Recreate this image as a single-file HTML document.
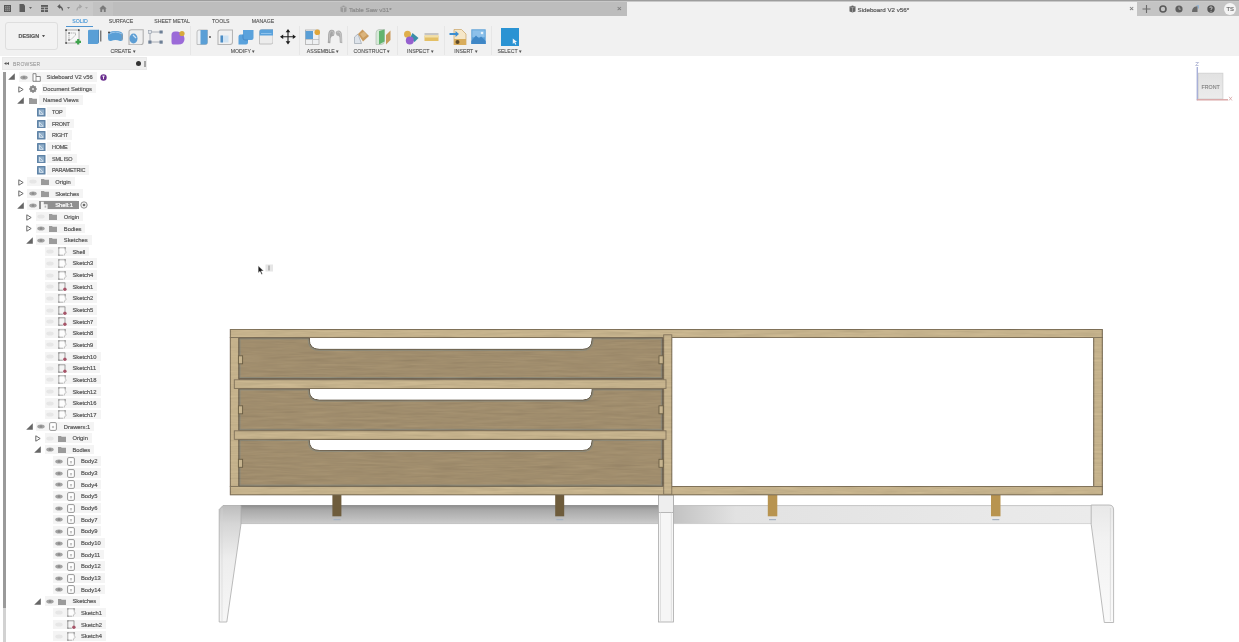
<!DOCTYPE html>
<html><head><meta charset="utf-8">
<style>
*{box-sizing:border-box;margin:0;padding:0}
html,body{width:1239px;height:642px;overflow:hidden;background:#fff}
body{position:relative;font-family:"Liberation Sans",sans-serif;color:#555}
.a{position:absolute}
.ic{position:absolute;display:block}
.lb{position:absolute;height:9.5px;background:#f4f4f4}
.act{position:absolute;height:10px;background:#8f8f8f}
.tx{position:absolute;font-size:5.8px;line-height:8px;white-space:nowrap;-webkit-text-stroke:0.18px currentColor}
.tb{position:absolute;font-size:5.2px;line-height:7px;white-space:nowrap;color:#505050;transform:translateX(-50%);-webkit-text-stroke:0.1px currentColor}
.sep{position:absolute;top:26px;width:1px;height:29px;background:#e6e6e6}
#w{position:absolute;left:0;top:0;width:1239px;height:642px;overflow:hidden;background:#fff;filter:blur(0.5px)}
</style></head><body><div id="w">
<!-- tab bar -->
<div class="a" style="left:0;top:0;width:1239px;height:16px;background:#c9c9c9"></div>
<div class="a" style="left:0;top:0;width:1239px;height:1.2px;background:#9d9d9d"></div>
<div class="a" style="left:93px;top:1.5px;width:20px;height:14.5px;background:#c2c2c2"></div>
<div class="a" style="left:113px;top:1.5px;width:514px;height:14.5px;background:#bdbdbd"></div>
<div class="a" style="left:627px;top:1.5px;width:510px;height:14.5px;background:#f1f1f1"></div>
<div class="a" style="left:1137px;top:1.5px;width:102px;height:14.5px;background:#c4c4c4"></div>
<!-- left app icons -->
<svg class="ic" style="left:3.5px;top:4.5px" width="7" height="7" viewBox="0 0 7 7"><rect x="0.5" y="0.5" width="6" height="6" fill="#8c8c8c" stroke="#555" stroke-width="1"/><path d="M0.5 2.5 H6.5 M0.5 4.5 H6.5 M2.5 0.5 V6.5 M4.5 0.5 V6.5" stroke="#666" stroke-width="0.6"/></svg>
<svg class="ic" style="left:19px;top:4px" width="14" height="8" viewBox="0 0 14 8"><path d="M0.5 0 H4.5 L6 1.5 V8 H0.5 Z" fill="#5c5c5c"/><path d="M10 3 H13 L11.5 5 Z" fill="#666"/></svg>
<svg class="ic" style="left:41px;top:4.5px" width="7" height="7" viewBox="0 0 7 7"><rect x="0" y="0" width="7" height="7" fill="#5c5c5c"/><path d="M0 2.3 H7 M0 4.6 H7 M3.5 2.3 V7" stroke="#c9c9c9" stroke-width="0.7"/></svg>
<svg class="ic" style="left:57px;top:4px" width="14" height="8" viewBox="0 0 14 8"><path d="M5.5 6.5 Q5.5 2.5 1.5 2.5 M3.2 0.8 L1.2 2.5 L3.2 4.2" fill="none" stroke="#5c5c5c" stroke-width="1.3"/><path d="M10 3 H13 L11.5 5 Z" fill="#777"/></svg>
<svg class="ic" style="left:76px;top:4px" width="14" height="8" viewBox="0 0 14 8"><path d="M1 6.5 Q1 2.5 5 2.5 M3.3 0.8 L5.3 2.5 L3.3 4.2" fill="none" stroke="#a6a6a6" stroke-width="1.2"/><path d="M9 3 H12 L10.5 5 Z" fill="#aaa"/></svg>
<svg class="ic" style="left:99px;top:5px" width="8" height="7" viewBox="0 0 8 7"><path d="M4 0.3 L7.7 3.5 H6.7 V7 H1.3 V3.5 H0.3 Z" fill="#7a7a7a"/><rect x="3.2" y="4.4" width="1.6" height="2.6" fill="#c2c2c2"/></svg>
<!-- inactive tab -->
<svg class="ic" style="left:340px;top:5px" width="7" height="8" viewBox="0 0 7 8"><path d="M0.5 1.5 L3.5 0.5 L6.5 1.5 V6.5 L3.5 7.5 L0.5 6.5 Z" fill="#9a9a9a"/><path d="M0.5 1.5 L3.5 2.5 L6.5 1.5 M3.5 2.5 V7.5" stroke="#cfcfcf" stroke-width="0.6" fill="none"/></svg>
<div class="tx" style="left:349px;top:5.5px;font-size:6.2px;color:#8a8a8a">Table Saw v31*</div>
<div class="tx" style="left:617px;top:5.2px;font-size:8px;color:#7a7a7a">&#215;</div>
<!-- active tab -->
<svg class="ic" style="left:848.5px;top:5px" width="7" height="8" viewBox="0 0 7 8"><path d="M0.5 1.5 L3.5 0.5 L6.5 1.5 V6.5 L3.5 7.5 L0.5 6.5 Z" fill="#666"/><path d="M0.5 1.5 L3.5 2.5 L6.5 1.5 M3.5 2.5 V7.5" stroke="#bbb" stroke-width="0.6" fill="none"/></svg>
<div class="tx" style="left:857.5px;top:5.5px;font-size:6.2px;color:#555">Sideboard V2 v56*</div>
<div class="tx" style="left:1129.3px;top:5.2px;font-size:8px;color:#777">&#215;</div>
<!-- right icons -->
<svg class="ic" style="left:1142px;top:5px" width="9" height="8" viewBox="0 0 9 8"><path d="M4.5 0 V8 M0.5 4 H8.5" stroke="#6a6a6a" stroke-width="1.1"/></svg>
<svg class="ic" style="left:1158.5px;top:5px" width="8" height="8" viewBox="0 0 8 8"><circle cx="4" cy="4" r="3" fill="none" stroke="#5a5a5a" stroke-width="1.6"/></svg>
<svg class="ic" style="left:1175px;top:5px" width="8" height="8" viewBox="0 0 8 8"><circle cx="4" cy="4" r="3.6" fill="#5e5e5e"/><path d="M4 1.8 V4.2 H5.8" stroke="#c4c4c4" stroke-width="0.8" fill="none"/></svg>
<svg class="ic" style="left:1191px;top:4.5px" width="8" height="8" viewBox="0 0 8 8"><path d="M1 7 Q1 2 5 1.5 L6.5 1 V7 Z" fill="#6a6a6a"/><path d="M5.5 0.8 L7.5 0.5 V3.5" stroke="#8fb3d6" stroke-width="1" fill="none"/></svg>
<svg class="ic" style="left:1207px;top:5px" width="8" height="8" viewBox="0 0 8 8"><circle cx="4" cy="4" r="3.7" fill="#555"/><path d="M2.8 3 Q2.8 1.8 4 1.8 Q5.2 1.8 5.2 3 Q5.2 3.8 4 4.3 V5" stroke="#d0d0d0" stroke-width="0.9" fill="none"/><circle cx="4" cy="6.2" r="0.5" fill="#d0d0d0"/></svg>
<div class="a" style="left:1224px;top:3px;width:12px;height:12px;border-radius:50%;background:#f4f4f4"></div>
<div class="tx" style="left:1226.5px;top:5px;font-size:5.8px;color:#666">TS</div>

<!-- toolbar -->
<div class="a" style="left:0;top:16px;width:1239px;height:40px;background:#f1f1f1"></div>
<div class="a" style="left:5.3px;top:21.6px;width:52.3px;height:28.4px;border:1px solid #dedede;border-radius:3px;background:#f2f2f2"></div>
<div class="tx" style="left:18.5px;top:31.8px;font-size:5.4px;font-weight:bold;color:#5a5a5a">DESIGN</div>
<svg class="ic" style="left:41.5px;top:34.6px" width="3" height="2.5" viewBox="0 0 3 2.5"><path d="M0 0 H3 L1.5 2.5 Z" fill="#555"/></svg>
<!-- tabs -->
<div class="tb" style="left:80px;top:18.2px;color:#3d92d6">SOLID</div>
<div class="a" style="left:66px;top:26px;width:27px;height:1.2px;background:#4f94cf"></div>
<div class="tb" style="left:121px;top:18.2px">SURFACE</div>
<div class="tb" style="left:172px;top:18.2px">SHEET METAL</div>
<div class="tb" style="left:220.8px;top:18.2px">TOOLS</div>
<div class="tb" style="left:263px;top:18.2px">MANAGE</div>
<!-- group labels -->
<div class="tb" style="left:123px;top:48px">CREATE &#9662;</div>
<div class="tb" style="left:243px;top:48px">MODIFY &#9662;</div>
<div class="tb" style="left:323px;top:48px">ASSEMBLE &#9662;</div>
<div class="tb" style="left:372px;top:48px">CONSTRUCT &#9662;</div>
<div class="tb" style="left:420.4px;top:48px">INSPECT &#9662;</div>
<div class="tb" style="left:466px;top:48px">INSERT &#9662;</div>
<div class="tb" style="left:509.7px;top:48px">SELECT &#9662;</div>
<!-- separators -->
<div class="sep" style="left:190px"></div>
<div class="sep" style="left:299.3px"></div>
<div class="sep" style="left:347px"></div>
<div class="sep" style="left:396.5px"></div>
<div class="sep" style="left:444.3px"></div>
<div class="sep" style="left:491px"></div>
<!-- CREATE icons -->
<svg class="ic" style="left:65px;top:28.5px" width="16" height="16" viewBox="0 0 16 16">
<rect x="1" y="1" width="13" height="13" fill="#f7f7f7" stroke="#6a6a6a" stroke-width="0.5"/>
<rect x="0.3" y="0.3" width="1.6" height="1.6" fill="#444"/><rect x="0.3" y="13.2" width="1.6" height="1.6" fill="#444"/><rect x="13" y="0.3" width="1.6" height="1.6" fill="#444"/>
<path d="M4 4 V11 M4 4 H10.5 V6 Q8 9 5 11" fill="none" stroke="#8a8a8a" stroke-width="0.7" stroke-dasharray="1.2 0.6"/><rect x="3.3" y="3.3" width="1.4" height="1.4" fill="#555"/><rect x="3.3" y="10.3" width="1.4" height="1.4" fill="#555"/>
<path d="M10.5 12.8 H16 M13.2 10 V15.6" stroke="#3fa34d" stroke-width="2.2"/>
</svg>
<svg class="ic" style="left:86.5px;top:29px" width="15" height="16" viewBox="0 0 15 16">
<path d="M1 2 Q1 0.8 2.5 0.8 H11.5 V13.8 Q11.5 15 10 15 H1 Z" fill="#5a9fd6"/>
<path d="M11.5 0.8 V13.8" stroke="#3d7fb8" stroke-width="0.8"/>
<path d="M13.8 1.5 V12.5" stroke="#333" stroke-width="0.9"/>
</svg>
<svg class="ic" style="left:106.5px;top:30px" width="17" height="13" viewBox="0 0 17 13">
<path d="M1 5 Q1 1 8.5 1 Q16 1 16 5 V8.5 Q16 11.5 13 11 Q8.5 9 4 11 Q1 11.5 1 8.5 Z" fill="#5a9fd6"/>
<path d="M2 4 Q8.5 0.2 15 4" fill="none" stroke="#9cc6ea" stroke-width="1"/>
<circle cx="2" cy="2.5" r="1" fill="#444"/>
<path d="M14.5 4 Q16.5 7 14.5 10" fill="none" stroke="#999" stroke-width="0.8"/>
</svg>
<svg class="ic" style="left:128px;top:28.5px" width="16" height="16.5" viewBox="0 0 16 16.5">
<path d="M1 3 Q1 0.8 3.5 0.8 H15.2 V13 Q15.2 15.8 12.5 15.8 H1 Z" fill="#efefef" stroke="#b0b0b0" stroke-width="1.1"/>
<ellipse cx="5.5" cy="9.5" rx="4" ry="5" fill="#5d9ed4"/>
<path d="M5 6 L8 9" stroke="#cfe5f7" stroke-width="1.3"/>
</svg>
<svg class="ic" style="left:148px;top:30px" width="15.5" height="14" viewBox="0 0 15.5 14">
<path d="M2 2 V12 M2 2 H13 M2 12 H13" stroke="#9aa0a8" stroke-width="0.8"/>
<rect x="0.3" y="0.3" width="3" height="3" fill="#dfe4ea" stroke="#8892a0" stroke-width="0.5"/>
<rect x="11.5" y="0.5" width="3.2" height="3" fill="#6d7f96"/>
<rect x="0.3" y="10.5" width="3.2" height="3.2" fill="#6d7f96"/>
<rect x="11.5" y="10.5" width="3.2" height="3.2" fill="#6d7f96"/>
</svg>
<svg class="ic" style="left:169.5px;top:29.5px" width="16" height="15" viewBox="0 0 16 15">
<path d="M1.5 5 Q1.5 1 6 1.5 Q9 1 11 3 Q14.5 5 14.5 9 Q14.5 14.5 8 14.5 H3 Q1.5 14.5 1.5 12 Z" fill="#9b6ad8"/>
<circle cx="12" cy="3.5" r="2.6" fill="#d7a93c"/>
</svg>
<!-- MODIFY icons -->
<svg class="ic" style="left:195.5px;top:28.5px" width="16" height="16" viewBox="0 0 16 16">
<path d="M1 3 Q1 1 3 1 H11.5 V13.5 Q11.5 15.5 9.5 15.5 H1 Z" fill="#eef1f4" stroke="#aaa" stroke-width="0.7"/>
<path d="M4.5 1 H11.5 V13.5 Q11.5 15.5 9.5 15.5 H4.5 Z" fill="#5a9fd6"/>
<circle cx="14" cy="8" r="0.9" fill="#444"/>
</svg>
<svg class="ic" style="left:216.5px;top:28.5px" width="16.5" height="16.5" viewBox="0 0 16.5 16.5">
<path d="M1 3.5 Q1 1 3.5 1 H15.5 V13 Q15.5 15.5 13 15.5 H1 Z" fill="#f1f1f1" stroke="#b5b5b5" stroke-width="1.1"/>
<rect x="3.5" y="6.5" width="8" height="7" fill="#cfe3f3"/>
<path d="M3.5 6.5 H6 V13.5 H3.5 Z" fill="#4d8dc4"/>
</svg>
<svg class="ic" style="left:237.5px;top:29px" width="16" height="15.5" viewBox="0 0 16 15.5">
<path d="M5 1 H15.5 V9 Q15.5 11 13.5 11 H10 V13.5 Q10 15.5 8 15.5 H0.5 V7.5 Q0.5 5.5 2.5 5.5 H5 Z" fill="#5aa2dc"/>
<path d="M5 5.5 V9 Q5 11 7 11 H10" fill="none" stroke="#3d80bd" stroke-width="0.7"/>
</svg>
<svg class="ic" style="left:258.8px;top:29px" width="14.5" height="15.5" viewBox="0 0 14.5 15.5">
<path d="M0.5 2.5 Q0.5 0.5 2.5 0.5 H14 V13 Q14 15 12 15 H0.5 Z" fill="#ececec" stroke="#b5b5b5" stroke-width="0.8"/>
<path d="M0.5 2.5 Q0.5 0.5 2.5 0.5 H14 V6.5 H0.5 Z" fill="#5aa2dc"/>
<path d="M2 4.5 H12.5" stroke="#8ec2ec" stroke-width="1"/>
</svg>
<svg class="ic" style="left:279.5px;top:29px" width="16" height="15.5" viewBox="0 0 16 15.5">
<path d="M8 1.5 V14 M1.5 7.75 H14.5" stroke="#1e1e1e" stroke-width="1.1"/>
<path d="M8 0 L10.3 3.2 H5.7 Z M8 15.5 L10.3 12.3 H5.7 Z M0 7.75 L3.2 5.45 V10.05 Z M16 7.75 L12.8 5.45 V10.05 Z" fill="#1e1e1e"/>
</svg>
<!-- ASSEMBLE icons -->
<svg class="ic" style="left:305px;top:29px" width="15" height="16" viewBox="0 0 15 16">
<rect x="0.5" y="1" width="13.5" height="14.5" fill="#eef0f2" stroke="#9a9a9a" stroke-width="0.6"/>
<rect x="0.5" y="2" width="7.5" height="8" fill="#5a9fd6"/>
<path d="M0.5 10.5 H14 M7.5 10.5 V15.5" stroke="#aaa" stroke-width="0.6"/>
<circle cx="12.3" cy="3.2" r="2.8" fill="#e0a63a"/>
</svg>
<svg class="ic" style="left:326.5px;top:29px" width="16" height="15" viewBox="0 0 16 15">
<path d="M0.8 14 L1.2 5.5 Q1.5 0.8 4.8 0.8 Q7.8 0.8 7.6 3.8 L7 6.8 Q4.2 6.5 3.6 9.5 L3.3 14.2 Z" fill="#a6a6a6"/>
<path d="M2.2 12.5 L2.5 5.5 Q2.8 2 4.8 2 Q6.5 2 6.4 4 L6 5.8" fill="none" stroke="#d4d4d4" stroke-width="0.6"/>
<path d="M8.6 4 Q8.8 1.5 11.3 1.5 Q14.6 1.5 15 6 L15.3 14.2 L12.8 13.8 L12.5 8.5 Q12.2 6.8 9.8 6.6 Z" fill="#b0b0b0"/>
<path d="M10 3.2 Q11.5 2.5 13 3.8 Q14 5 14 8 L14.2 12.8" fill="none" stroke="#dadada" stroke-width="0.6"/>
</svg>
<!-- CONSTRUCT icons -->
<svg class="ic" style="left:353.5px;top:29px" width="15.5" height="15" viewBox="0 0 15.5 15">
<path d="M0.5 14.5 V8 L4 5 L7.5 14.5 Z" fill="#dde3ea" stroke="#8f99a5" stroke-width="0.6"/>
<path d="M4 5 L8.5 0.5 L15 7 L9 12.5 Z" fill="#c99a5c"/>
<path d="M6 5 L10 2.5 L13 6 L9 9 Z" fill="#dbb47c"/>
</svg>
<svg class="ic" style="left:374.5px;top:28.5px" width="16.5" height="16" viewBox="0 0 16.5 16">
<path d="M1 4 Q1 1 4 0.5 L9.5 0.5 V12 Q9.5 15.5 6 15.5 H1 Z" fill="#d5ead7" stroke="#a8b3a9" stroke-width="0.6"/>
<path d="M4 2 L9.5 0.5 V12.5 L4 15.5 Z" fill="#62b36e"/>
<path d="M11 6 L15.5 1.5 V11 L11 15.5 Z" fill="#c99a5c"/>
</svg>
<!-- INSPECT icons -->
<svg class="ic" style="left:402.5px;top:29.5px" width="16" height="15" viewBox="0 0 16 15">
<circle cx="4.5" cy="4.2" r="3.5" fill="#e0b04c"/>
<path d="M9.5 3 L15.5 8 L11.5 12 L7 8 Z" fill="#3a8fa8"/>
<circle cx="6.8" cy="10.5" r="4" fill="#9560cf"/>
</svg>
<svg class="ic" style="left:424px;top:32.5px" width="15" height="8.5" viewBox="0 0 15 8.5">
<rect x="0.5" y="0.5" width="14" height="1" fill="#9a9a9a"/>
<rect x="0.5" y="2.5" width="14" height="5.5" fill="#e4c066"/>
<rect x="0.5" y="2.5" width="14" height="2" fill="#f1e0aa"/>
</svg>
<!-- INSERT icons -->
<svg class="ic" style="left:448.5px;top:28.5px" width="18" height="16.5" viewBox="0 0 18 16.5">
<path d="M5 0.5 H12.5 L17 5 V16 H5 Z" fill="#f6e7c8" stroke="#c9a464" stroke-width="0.7"/>
<path d="M5 10 H17 V16 H5 Z" fill="#d9ad5c"/>
<circle cx="8.5" cy="13" r="2" fill="#5e4a2a"/>
<path d="M0.5 5 H7" stroke="#3d8ed0" stroke-width="2"/>
<path d="M6.5 2 L10 5 L6.5 8 Z" fill="#3d8ed0"/>
</svg>
<svg class="ic" style="left:471px;top:28.5px" width="15" height="15.5" viewBox="0 0 15 15.5">
<rect x="0.3" y="0.3" width="14.4" height="14.8" fill="#5aa0d8"/>
<rect x="1.3" y="1.3" width="12.4" height="7" fill="#8cc0ea"/>
<path d="M0.3 12 L5 6.5 L8 9.5 L10 7.5 L14.7 12 V15.1 H0.3 Z" fill="#3f87c6"/>
<circle cx="11" cy="4" r="1.3" fill="#e6f2fb"/>
</svg>
<!-- SELECT -->
<svg class="ic" style="left:500.8px;top:27.6px" width="18.2" height="18.2" viewBox="0 0 18.2 18.2">
<rect x="0" y="0" width="18.2" height="18.2" fill="#2a93d3"/>
<path d="M11.8 10.5 V16 L13.2 14.6 L14.4 16.8 L15.3 16.3 L14.2 14.1 L16.1 14 Z" fill="#f0f6fb"/>
</svg>

<!-- browser -->
<div class="a" style="left:1.5px;top:57px;width:145.5px;height:12.8px;background:#efefef;border:0.6px solid #e9e9e9"></div>
<svg class="ic" style="left:4px;top:62.2px" width="5" height="3" viewBox="0 0 5 3"><path d="M2.5 0 L0 1.5 L2.5 3 Z M5 0 L2.5 1.5 L5 3 Z" fill="#555"/></svg>
<div class="tx" style="left:13px;top:59.6px;font-size:5.1px;color:#8a8a8a;letter-spacing:0.15px;-webkit-text-stroke:0">BROWSER</div>
<div class="a" style="left:136px;top:61.3px;width:5px;height:5px;border-radius:50%;background:#333"></div>
<div class="a" style="left:143.6px;top:61px;width:2px;height:6px;background:#a6a6a6"></div>
<div class="a" style="left:3px;top:72px;width:3px;height:536px;background:#9a9a9a"></div>
<div class="a" style="left:3px;top:608px;width:3px;height:34px;background:#d2d2d2"></div>
<div class="lb" style="left:18.5px;top:72.0px;width:78.2px"></div>
<svg class="ic" style="left:8.3px;top:73.4px" width="7" height="7" viewBox="0 0 7 7"><path d="M0.2 6.8 L6.8 6.8 L6.8 0.2 Z" fill="#666"/></svg>
<svg class="ic" style="left:20.0px;top:74.5px" width="8" height="5" viewBox="0 0 8 5"><ellipse cx="4" cy="2.5" rx="3.7" ry="2.1" fill="#a3a3a3"/><circle cx="4" cy="2.5" r="1.2" fill="#8a8a8a"/></svg>
<svg class="ic" style="left:32.0px;top:72.5px" width="9" height="9" viewBox="0 0 9 9"><path d="M1 0.7 H4 V3.5 H8.3 V8.3 H1 Z" fill="#fff" stroke="#7a7a7a" stroke-width="0.9"/><path d="M4 3.5 V8.3" stroke="#7a7a7a" stroke-width="0.8"/></svg>
<div class="tx" style="left:46.6px;top:73.0px;color:#555">Sideboard V2 v56</div>
<svg class="ic" style="left:99.5px;top:73.5px" width="7" height="7" viewBox="0 0 7 7"><circle cx="3.5" cy="3.5" r="3.2" fill="#6a2f8f"/><path d="M2.3 2.1 H4.7 M3.5 2.1 V5.2" stroke="#fff" stroke-width="0.9"/></svg>
<div class="lb" style="left:42.0px;top:83.7px;width:54.0px"></div>
<svg class="ic" style="left:17.5px;top:85.5px" width="6" height="7" viewBox="0 0 6 7"><path d="M0.8 0.8 L5.2 3.5 L0.8 6.2 Z" fill="none" stroke="#6b6b6b" stroke-width="1"/></svg>
<svg class="ic" style="left:29.0px;top:84.7px" width="8" height="8" viewBox="0 0 8 8"><path d="M7.81 3.15 L7.81 4.85 L6.68 5.10 L6.68 5.12 L7.29 6.09 L6.09 7.29 L5.12 6.68 L5.10 6.68 L4.85 7.81 L3.15 7.81 L2.90 6.68 L2.88 6.68 L1.91 7.29 L0.71 6.09 L1.32 5.12 L1.32 5.10 L0.19 4.85 L0.19 3.15 L1.32 2.90 L1.32 2.88 L0.71 1.91 L1.91 0.71 L2.88 1.32 L2.90 1.32 L3.15 0.19 L4.85 0.19 L5.10 1.32 L5.12 1.32 L6.09 0.71 L7.29 1.91 L6.68 2.88 L6.68 2.90 Z" fill="#8a8a8a"/><circle cx="4" cy="4" r="1.1" fill="#e8e8e8"/></svg>
<div class="tx" style="left:43.0px;top:84.7px;color:#555">Document Settings</div>
<div class="lb" style="left:39.0px;top:95.3px;width:43.7px"></div>
<svg class="ic" style="left:17.0px;top:96.7px" width="7" height="7" viewBox="0 0 7 7"><path d="M0.2 6.8 L6.8 6.8 L6.8 0.2 Z" fill="#666"/></svg>
<svg class="ic" style="left:29.0px;top:96.8px" width="8" height="7" viewBox="0 0 8 7"><path d="M0 1 H3 L3.7 1.8 H8 V7 H0 Z" fill="#9b9b9b"/></svg>
<div class="tx" style="left:43.0px;top:96.3px;color:#555">Named Views</div>
<div class="lb" style="left:47.0px;top:107.0px;width:19.4px"></div>
<svg class="ic" style="left:37.0px;top:108.0px" width="8.5" height="8.5" viewBox="0 0 8.5 8.5"><rect x="0" y="0" width="8.5" height="8.5" rx="0.6" fill="#5f83a6"/><rect x="1.4" y="1.4" width="5.7" height="5.7" fill="#8fadc8"/><path d="M2.6 2.2 V6.3 H6.3 M2.8 2.6 L5.9 5.8" stroke="#dce8f2" stroke-width="0.9" fill="none"/></svg>
<div class="tx" style="left:52.0px;top:108.0px;color:#555;font-size:5.5px;letter-spacing:-0.25px">TOP</div>
<div class="lb" style="left:47.0px;top:118.6px;width:26.6px"></div>
<svg class="ic" style="left:37.0px;top:119.6px" width="8.5" height="8.5" viewBox="0 0 8.5 8.5"><rect x="0" y="0" width="8.5" height="8.5" rx="0.6" fill="#5f83a6"/><rect x="1.4" y="1.4" width="5.7" height="5.7" fill="#8fadc8"/><path d="M2.6 2.2 V6.3 H6.3 M2.8 2.6 L5.9 5.8" stroke="#dce8f2" stroke-width="0.9" fill="none"/></svg>
<div class="tx" style="left:52.0px;top:119.6px;color:#555;font-size:5.5px;letter-spacing:-0.25px">FRONT</div>
<div class="lb" style="left:47.0px;top:130.2px;width:24.9px"></div>
<svg class="ic" style="left:37.0px;top:131.2px" width="8.5" height="8.5" viewBox="0 0 8.5 8.5"><rect x="0" y="0" width="8.5" height="8.5" rx="0.6" fill="#5f83a6"/><rect x="1.4" y="1.4" width="5.7" height="5.7" fill="#8fadc8"/><path d="M2.6 2.2 V6.3 H6.3 M2.8 2.6 L5.9 5.8" stroke="#dce8f2" stroke-width="0.9" fill="none"/></svg>
<div class="tx" style="left:52.0px;top:131.2px;color:#555;font-size:5.5px;letter-spacing:-0.25px">RIGHT</div>
<div class="lb" style="left:47.0px;top:141.9px;width:24.3px"></div>
<svg class="ic" style="left:37.0px;top:142.9px" width="8.5" height="8.5" viewBox="0 0 8.5 8.5"><rect x="0" y="0" width="8.5" height="8.5" rx="0.6" fill="#5f83a6"/><rect x="1.4" y="1.4" width="5.7" height="5.7" fill="#8fadc8"/><path d="M2.6 2.2 V6.3 H6.3 M2.8 2.6 L5.9 5.8" stroke="#dce8f2" stroke-width="0.9" fill="none"/></svg>
<div class="tx" style="left:52.0px;top:142.9px;color:#555;font-size:5.5px;letter-spacing:-0.25px">HOME</div>
<div class="lb" style="left:47.0px;top:153.6px;width:29.5px"></div>
<svg class="ic" style="left:37.0px;top:154.6px" width="8.5" height="8.5" viewBox="0 0 8.5 8.5"><rect x="0" y="0" width="8.5" height="8.5" rx="0.6" fill="#5f83a6"/><rect x="1.4" y="1.4" width="5.7" height="5.7" fill="#8fadc8"/><path d="M2.6 2.2 V6.3 H6.3 M2.8 2.6 L5.9 5.8" stroke="#dce8f2" stroke-width="0.9" fill="none"/></svg>
<div class="tx" style="left:52.0px;top:154.6px;color:#555;font-size:5.5px;letter-spacing:-0.25px">SML ISO</div>
<div class="lb" style="left:47.0px;top:165.2px;width:42.1px"></div>
<svg class="ic" style="left:37.0px;top:166.2px" width="8.5" height="8.5" viewBox="0 0 8.5 8.5"><rect x="0" y="0" width="8.5" height="8.5" rx="0.6" fill="#5f83a6"/><rect x="1.4" y="1.4" width="5.7" height="5.7" fill="#8fadc8"/><path d="M2.6 2.2 V6.3 H6.3 M2.8 2.6 L5.9 5.8" stroke="#dce8f2" stroke-width="0.9" fill="none"/></svg>
<div class="tx" style="left:52.0px;top:166.2px;color:#555;font-size:5.5px;letter-spacing:-0.25px">PARAMETRIC</div>
<div class="lb" style="left:27.2px;top:176.9px;width:47.5px"></div>
<svg class="ic" style="left:17.5px;top:178.7px" width="6" height="7" viewBox="0 0 6 7"><path d="M0.8 0.8 L5.2 3.5 L0.8 6.2 Z" fill="none" stroke="#6b6b6b" stroke-width="1"/></svg>
<svg class="ic" style="left:28.7px;top:179.4px" width="8" height="5" viewBox="0 0 8 5"><ellipse cx="4" cy="2.5" rx="3.7" ry="2.1" fill="#e6e6e6"/></svg>
<svg class="ic" style="left:40.7px;top:178.4px" width="8" height="7" viewBox="0 0 8 7"><path d="M0 1 H3 L3.7 1.8 H8 V7 H0 Z" fill="#9b9b9b"/></svg>
<div class="tx" style="left:55.2px;top:177.9px;color:#555">Origin</div>
<div class="lb" style="left:27.2px;top:188.5px;width:55.9px"></div>
<svg class="ic" style="left:17.5px;top:190.3px" width="6" height="7" viewBox="0 0 6 7"><path d="M0.8 0.8 L5.2 3.5 L0.8 6.2 Z" fill="none" stroke="#6b6b6b" stroke-width="1"/></svg>
<svg class="ic" style="left:28.7px;top:191.0px" width="8" height="5" viewBox="0 0 8 5"><ellipse cx="4" cy="2.5" rx="3.7" ry="2.1" fill="#a3a3a3"/><circle cx="4" cy="2.5" r="1.2" fill="#8a8a8a"/></svg>
<svg class="ic" style="left:40.7px;top:190.0px" width="8" height="7" viewBox="0 0 8 7"><path d="M0 1 H3 L3.7 1.8 H8 V7 H0 Z" fill="#9b9b9b"/></svg>
<div class="tx" style="left:55.2px;top:189.5px;color:#555">Sketches</div>
<div class="lb" style="left:27.2px;top:200.2px;width:49.7px"></div>
<svg class="ic" style="left:17.0px;top:201.6px" width="7" height="7" viewBox="0 0 7 7"><path d="M0.2 6.8 L6.8 6.8 L6.8 0.2 Z" fill="#666"/></svg>
<svg class="ic" style="left:28.7px;top:202.7px" width="8" height="5" viewBox="0 0 8 5"><ellipse cx="4" cy="2.5" rx="3.7" ry="2.1" fill="#a3a3a3"/><circle cx="4" cy="2.5" r="1.2" fill="#8a8a8a"/></svg>
<div class="act" style="left:39px;top:201.0px;width:39.8px;height:7.8px"></div>
<svg class="ic" style="left:39.7px;top:200.7px" width="9" height="9" viewBox="0 0 9 9"><path d="M1 0.8 H3.8 V3.2 H7.6 V8 H1 Z" fill="#f4f4f4"/><rect x="4.6" y="4.6" width="1.6" height="2" fill="#b0b0b0"/></svg>
<div class="tx" style="left:55.2px;top:201.2px;color:#fff">Shell:1</div>
<svg class="ic" style="left:80px;top:201.2px" width="8" height="8" viewBox="0 0 8 8"><circle cx="4" cy="4" r="3.2" fill="#f4f4f4" stroke="#7a7a7a" stroke-width="0.8"/><circle cx="4" cy="4" r="1.3" fill="#6a6a6a"/></svg>
<div class="lb" style="left:35.9px;top:211.8px;width:47.4px"></div>
<svg class="ic" style="left:26.2px;top:213.6px" width="6" height="7" viewBox="0 0 6 7"><path d="M0.8 0.8 L5.2 3.5 L0.8 6.2 Z" fill="none" stroke="#6b6b6b" stroke-width="1"/></svg>
<svg class="ic" style="left:37.4px;top:214.3px" width="8" height="5" viewBox="0 0 8 5"><ellipse cx="4" cy="2.5" rx="3.7" ry="2.1" fill="#e6e6e6"/></svg>
<svg class="ic" style="left:49.4px;top:213.3px" width="8" height="7" viewBox="0 0 8 7"><path d="M0 1 H3 L3.7 1.8 H8 V7 H0 Z" fill="#9b9b9b"/></svg>
<div class="tx" style="left:63.8px;top:212.8px;color:#555">Origin</div>
<div class="lb" style="left:35.9px;top:223.5px;width:49.6px"></div>
<svg class="ic" style="left:26.2px;top:225.3px" width="6" height="7" viewBox="0 0 6 7"><path d="M0.8 0.8 L5.2 3.5 L0.8 6.2 Z" fill="none" stroke="#6b6b6b" stroke-width="1"/></svg>
<svg class="ic" style="left:37.4px;top:226.0px" width="8" height="5" viewBox="0 0 8 5"><ellipse cx="4" cy="2.5" rx="3.7" ry="2.1" fill="#a3a3a3"/><circle cx="4" cy="2.5" r="1.2" fill="#8a8a8a"/></svg>
<svg class="ic" style="left:49.4px;top:225.0px" width="8" height="7" viewBox="0 0 8 7"><path d="M0 1 H3 L3.7 1.8 H8 V7 H0 Z" fill="#9b9b9b"/></svg>
<div class="tx" style="left:63.8px;top:224.5px;color:#555">Bodies</div>
<div class="lb" style="left:35.9px;top:235.1px;width:55.8px"></div>
<svg class="ic" style="left:25.7px;top:236.5px" width="7" height="7" viewBox="0 0 7 7"><path d="M0.2 6.8 L6.8 6.8 L6.8 0.2 Z" fill="#666"/></svg>
<svg class="ic" style="left:37.4px;top:237.6px" width="8" height="5" viewBox="0 0 8 5"><ellipse cx="4" cy="2.5" rx="3.7" ry="2.1" fill="#a3a3a3"/><circle cx="4" cy="2.5" r="1.2" fill="#8a8a8a"/></svg>
<svg class="ic" style="left:49.4px;top:236.6px" width="8" height="7" viewBox="0 0 8 7"><path d="M0 1 H3 L3.7 1.8 H8 V7 H0 Z" fill="#9b9b9b"/></svg>
<div class="tx" style="left:63.8px;top:236.1px;color:#555">Sketches</div>
<div class="lb" style="left:44.6px;top:246.8px;width:44.7px"></div>
<svg class="ic" style="left:46.1px;top:249.2px" width="8" height="5" viewBox="0 0 8 5"><ellipse cx="4" cy="2.5" rx="3.7" ry="2.1" fill="#e6e6e6"/></svg>
<svg class="ic" style="left:58.1px;top:247.2px" width="9" height="9" viewBox="0 0 9 9"><path d="M7.2 3.2 V0.8 H0.8 V8.2 H5.2" fill="#fdfdfd" stroke="#8f8f8f" stroke-width="0.7"/><path d="M7.2 3.2 L8.2 5.2 L6.6 7 L6.2 8.6" fill="none" stroke="#a0a0a0" stroke-width="0.6"/><rect x="0.3" y="0.3" width="1.1" height="1.1" fill="#777"/><rect x="6.6" y="0.3" width="1.1" height="1.1" fill="#777"/><rect x="0.3" y="7.6" width="1.1" height="1.1" fill="#777"/></svg>
<div class="tx" style="left:72.4px;top:247.8px;color:#555">Shell</div>
<div class="lb" style="left:44.6px;top:258.4px;width:52.8px"></div>
<svg class="ic" style="left:46.1px;top:260.9px" width="8" height="5" viewBox="0 0 8 5"><ellipse cx="4" cy="2.5" rx="3.7" ry="2.1" fill="#e6e6e6"/></svg>
<svg class="ic" style="left:58.1px;top:258.9px" width="9" height="9" viewBox="0 0 9 9"><path d="M7.2 3.2 V0.8 H0.8 V8.2 H5.2" fill="#fdfdfd" stroke="#8f8f8f" stroke-width="0.7"/><path d="M7.2 3.2 L8.2 5.2 L6.6 7 L6.2 8.6" fill="none" stroke="#a0a0a0" stroke-width="0.6"/><rect x="0.3" y="0.3" width="1.1" height="1.1" fill="#777"/><rect x="6.6" y="0.3" width="1.1" height="1.1" fill="#777"/><rect x="0.3" y="7.6" width="1.1" height="1.1" fill="#777"/></svg>
<div class="tx" style="left:72.4px;top:259.4px;color:#555">Sketch3</div>
<div class="lb" style="left:44.6px;top:270.1px;width:52.8px"></div>
<svg class="ic" style="left:46.1px;top:272.6px" width="8" height="5" viewBox="0 0 8 5"><ellipse cx="4" cy="2.5" rx="3.7" ry="2.1" fill="#e6e6e6"/></svg>
<svg class="ic" style="left:58.1px;top:270.6px" width="9" height="9" viewBox="0 0 9 9"><path d="M7.2 3.2 V0.8 H0.8 V8.2 H5.2" fill="#fdfdfd" stroke="#8f8f8f" stroke-width="0.7"/><path d="M7.2 3.2 L8.2 5.2 L6.6 7 L6.2 8.6" fill="none" stroke="#a0a0a0" stroke-width="0.6"/><rect x="0.3" y="0.3" width="1.1" height="1.1" fill="#777"/><rect x="6.6" y="0.3" width="1.1" height="1.1" fill="#777"/><rect x="0.3" y="7.6" width="1.1" height="1.1" fill="#777"/></svg>
<div class="tx" style="left:72.4px;top:271.1px;color:#555">Sketch4</div>
<div class="lb" style="left:44.6px;top:281.7px;width:52.8px"></div>
<svg class="ic" style="left:46.1px;top:284.2px" width="8" height="5" viewBox="0 0 8 5"><ellipse cx="4" cy="2.5" rx="3.7" ry="2.1" fill="#e6e6e6"/></svg>
<svg class="ic" style="left:58.1px;top:282.2px" width="9" height="9" viewBox="0 0 9 9"><path d="M0.8 0.8 H7.2 M0.8 0.8 V8.2 H4.8 M7 0.8 V5.8" fill="none" stroke="#7a7a7a" stroke-width="0.7"/><rect x="0.3" y="0.3" width="1.1" height="1.1" fill="#777"/><rect x="0.3" y="7.6" width="1.1" height="1.1" fill="#777"/><circle cx="6.9" cy="7.2" r="1.7" fill="#a65468"/></svg>
<div class="tx" style="left:72.4px;top:282.7px;color:#555">Sketch1</div>
<div class="lb" style="left:44.6px;top:293.4px;width:52.8px"></div>
<svg class="ic" style="left:46.1px;top:295.9px" width="8" height="5" viewBox="0 0 8 5"><ellipse cx="4" cy="2.5" rx="3.7" ry="2.1" fill="#e6e6e6"/></svg>
<svg class="ic" style="left:58.1px;top:293.9px" width="9" height="9" viewBox="0 0 9 9"><path d="M7.2 3.2 V0.8 H0.8 V8.2 H5.2" fill="#fdfdfd" stroke="#8f8f8f" stroke-width="0.7"/><path d="M7.2 3.2 L8.2 5.2 L6.6 7 L6.2 8.6" fill="none" stroke="#a0a0a0" stroke-width="0.6"/><rect x="0.3" y="0.3" width="1.1" height="1.1" fill="#777"/><rect x="6.6" y="0.3" width="1.1" height="1.1" fill="#777"/><rect x="0.3" y="7.6" width="1.1" height="1.1" fill="#777"/></svg>
<div class="tx" style="left:72.4px;top:294.4px;color:#555">Sketch2</div>
<div class="lb" style="left:44.6px;top:305.0px;width:52.8px"></div>
<svg class="ic" style="left:46.1px;top:307.5px" width="8" height="5" viewBox="0 0 8 5"><ellipse cx="4" cy="2.5" rx="3.7" ry="2.1" fill="#e6e6e6"/></svg>
<svg class="ic" style="left:58.1px;top:305.5px" width="9" height="9" viewBox="0 0 9 9"><path d="M0.8 0.8 H7.2 M0.8 0.8 V8.2 H4.8 M7 0.8 V5.8" fill="none" stroke="#7a7a7a" stroke-width="0.7"/><rect x="0.3" y="0.3" width="1.1" height="1.1" fill="#777"/><rect x="0.3" y="7.6" width="1.1" height="1.1" fill="#777"/><circle cx="6.9" cy="7.2" r="1.7" fill="#a65468"/></svg>
<div class="tx" style="left:72.4px;top:306.0px;color:#555">Sketch5</div>
<div class="lb" style="left:44.6px;top:316.6px;width:52.8px"></div>
<svg class="ic" style="left:46.1px;top:319.1px" width="8" height="5" viewBox="0 0 8 5"><ellipse cx="4" cy="2.5" rx="3.7" ry="2.1" fill="#e6e6e6"/></svg>
<svg class="ic" style="left:58.1px;top:317.1px" width="9" height="9" viewBox="0 0 9 9"><path d="M0.8 0.8 H7.2 M0.8 0.8 V8.2 H4.8 M7 0.8 V5.8" fill="none" stroke="#7a7a7a" stroke-width="0.7"/><rect x="0.3" y="0.3" width="1.1" height="1.1" fill="#777"/><rect x="0.3" y="7.6" width="1.1" height="1.1" fill="#777"/><circle cx="6.9" cy="7.2" r="1.7" fill="#a65468"/></svg>
<div class="tx" style="left:72.4px;top:317.6px;color:#555">Sketch7</div>
<div class="lb" style="left:44.6px;top:328.3px;width:52.8px"></div>
<svg class="ic" style="left:46.1px;top:330.8px" width="8" height="5" viewBox="0 0 8 5"><ellipse cx="4" cy="2.5" rx="3.7" ry="2.1" fill="#e6e6e6"/></svg>
<svg class="ic" style="left:58.1px;top:328.8px" width="9" height="9" viewBox="0 0 9 9"><path d="M7.2 3.2 V0.8 H0.8 V8.2 H5.2" fill="#fdfdfd" stroke="#8f8f8f" stroke-width="0.7"/><path d="M7.2 3.2 L8.2 5.2 L6.6 7 L6.2 8.6" fill="none" stroke="#a0a0a0" stroke-width="0.6"/><rect x="0.3" y="0.3" width="1.1" height="1.1" fill="#777"/><rect x="6.6" y="0.3" width="1.1" height="1.1" fill="#777"/><rect x="0.3" y="7.6" width="1.1" height="1.1" fill="#777"/></svg>
<div class="tx" style="left:72.4px;top:329.3px;color:#555">Sketch8</div>
<div class="lb" style="left:44.6px;top:339.9px;width:52.8px"></div>
<svg class="ic" style="left:46.1px;top:342.4px" width="8" height="5" viewBox="0 0 8 5"><ellipse cx="4" cy="2.5" rx="3.7" ry="2.1" fill="#e6e6e6"/></svg>
<svg class="ic" style="left:58.1px;top:340.4px" width="9" height="9" viewBox="0 0 9 9"><path d="M7.2 3.2 V0.8 H0.8 V8.2 H5.2" fill="#fdfdfd" stroke="#8f8f8f" stroke-width="0.7"/><path d="M7.2 3.2 L8.2 5.2 L6.6 7 L6.2 8.6" fill="none" stroke="#a0a0a0" stroke-width="0.6"/><rect x="0.3" y="0.3" width="1.1" height="1.1" fill="#777"/><rect x="6.6" y="0.3" width="1.1" height="1.1" fill="#777"/><rect x="0.3" y="7.6" width="1.1" height="1.1" fill="#777"/></svg>
<div class="tx" style="left:72.4px;top:340.9px;color:#555">Sketch9</div>
<div class="lb" style="left:44.6px;top:351.6px;width:56.0px"></div>
<svg class="ic" style="left:46.1px;top:354.1px" width="8" height="5" viewBox="0 0 8 5"><ellipse cx="4" cy="2.5" rx="3.7" ry="2.1" fill="#e6e6e6"/></svg>
<svg class="ic" style="left:58.1px;top:352.1px" width="9" height="9" viewBox="0 0 9 9"><path d="M0.8 0.8 H7.2 M0.8 0.8 V8.2 H4.8 M7 0.8 V5.8" fill="none" stroke="#7a7a7a" stroke-width="0.7"/><rect x="0.3" y="0.3" width="1.1" height="1.1" fill="#777"/><rect x="0.3" y="7.6" width="1.1" height="1.1" fill="#777"/><circle cx="6.9" cy="7.2" r="1.7" fill="#a65468"/></svg>
<div class="tx" style="left:72.4px;top:352.6px;color:#555">Sketch10</div>
<div class="lb" style="left:44.6px;top:363.2px;width:55.6px"></div>
<svg class="ic" style="left:46.1px;top:365.8px" width="8" height="5" viewBox="0 0 8 5"><ellipse cx="4" cy="2.5" rx="3.7" ry="2.1" fill="#e6e6e6"/></svg>
<svg class="ic" style="left:58.1px;top:363.8px" width="9" height="9" viewBox="0 0 9 9"><path d="M0.8 0.8 H7.2 M0.8 0.8 V8.2 H4.8 M7 0.8 V5.8" fill="none" stroke="#7a7a7a" stroke-width="0.7"/><rect x="0.3" y="0.3" width="1.1" height="1.1" fill="#777"/><rect x="0.3" y="7.6" width="1.1" height="1.1" fill="#777"/><circle cx="6.9" cy="7.2" r="1.7" fill="#a65468"/></svg>
<div class="tx" style="left:72.4px;top:364.2px;color:#555">Sketch11</div>
<div class="lb" style="left:44.6px;top:374.9px;width:56.0px"></div>
<svg class="ic" style="left:46.1px;top:377.4px" width="8" height="5" viewBox="0 0 8 5"><ellipse cx="4" cy="2.5" rx="3.7" ry="2.1" fill="#e6e6e6"/></svg>
<svg class="ic" style="left:58.1px;top:375.4px" width="9" height="9" viewBox="0 0 9 9"><path d="M7.2 3.2 V0.8 H0.8 V8.2 H5.2" fill="#fdfdfd" stroke="#8f8f8f" stroke-width="0.7"/><path d="M7.2 3.2 L8.2 5.2 L6.6 7 L6.2 8.6" fill="none" stroke="#a0a0a0" stroke-width="0.6"/><rect x="0.3" y="0.3" width="1.1" height="1.1" fill="#777"/><rect x="6.6" y="0.3" width="1.1" height="1.1" fill="#777"/><rect x="0.3" y="7.6" width="1.1" height="1.1" fill="#777"/></svg>
<div class="tx" style="left:72.4px;top:375.9px;color:#555">Sketch18</div>
<div class="lb" style="left:44.6px;top:386.6px;width:56.0px"></div>
<svg class="ic" style="left:46.1px;top:389.1px" width="8" height="5" viewBox="0 0 8 5"><ellipse cx="4" cy="2.5" rx="3.7" ry="2.1" fill="#e6e6e6"/></svg>
<svg class="ic" style="left:58.1px;top:387.1px" width="9" height="9" viewBox="0 0 9 9"><path d="M7.2 3.2 V0.8 H0.8 V8.2 H5.2" fill="#fdfdfd" stroke="#8f8f8f" stroke-width="0.7"/><path d="M7.2 3.2 L8.2 5.2 L6.6 7 L6.2 8.6" fill="none" stroke="#a0a0a0" stroke-width="0.6"/><rect x="0.3" y="0.3" width="1.1" height="1.1" fill="#777"/><rect x="6.6" y="0.3" width="1.1" height="1.1" fill="#777"/><rect x="0.3" y="7.6" width="1.1" height="1.1" fill="#777"/></svg>
<div class="tx" style="left:72.4px;top:387.6px;color:#555">Sketch12</div>
<div class="lb" style="left:44.6px;top:398.2px;width:56.0px"></div>
<svg class="ic" style="left:46.1px;top:400.7px" width="8" height="5" viewBox="0 0 8 5"><ellipse cx="4" cy="2.5" rx="3.7" ry="2.1" fill="#e6e6e6"/></svg>
<svg class="ic" style="left:58.1px;top:398.7px" width="9" height="9" viewBox="0 0 9 9"><path d="M7.2 3.2 V0.8 H0.8 V8.2 H5.2" fill="#fdfdfd" stroke="#8f8f8f" stroke-width="0.7"/><path d="M7.2 3.2 L8.2 5.2 L6.6 7 L6.2 8.6" fill="none" stroke="#a0a0a0" stroke-width="0.6"/><rect x="0.3" y="0.3" width="1.1" height="1.1" fill="#777"/><rect x="6.6" y="0.3" width="1.1" height="1.1" fill="#777"/><rect x="0.3" y="7.6" width="1.1" height="1.1" fill="#777"/></svg>
<div class="tx" style="left:72.4px;top:399.2px;color:#555">Sketch16</div>
<div class="lb" style="left:44.6px;top:409.9px;width:56.0px"></div>
<svg class="ic" style="left:46.1px;top:412.4px" width="8" height="5" viewBox="0 0 8 5"><ellipse cx="4" cy="2.5" rx="3.7" ry="2.1" fill="#e6e6e6"/></svg>
<svg class="ic" style="left:58.1px;top:410.4px" width="9" height="9" viewBox="0 0 9 9"><path d="M7.2 3.2 V0.8 H0.8 V8.2 H5.2" fill="#fdfdfd" stroke="#8f8f8f" stroke-width="0.7"/><path d="M7.2 3.2 L8.2 5.2 L6.6 7 L6.2 8.6" fill="none" stroke="#a0a0a0" stroke-width="0.6"/><rect x="0.3" y="0.3" width="1.1" height="1.1" fill="#777"/><rect x="6.6" y="0.3" width="1.1" height="1.1" fill="#777"/><rect x="0.3" y="7.6" width="1.1" height="1.1" fill="#777"/></svg>
<div class="tx" style="left:72.4px;top:410.9px;color:#555">Sketch17</div>
<div class="lb" style="left:35.9px;top:421.5px;width:58.3px"></div>
<svg class="ic" style="left:25.7px;top:422.9px" width="7" height="7" viewBox="0 0 7 7"><path d="M0.2 6.8 L6.8 6.8 L6.8 0.2 Z" fill="#666"/></svg>
<svg class="ic" style="left:37.4px;top:424.0px" width="8" height="5" viewBox="0 0 8 5"><ellipse cx="4" cy="2.5" rx="3.7" ry="2.1" fill="#a3a3a3"/><circle cx="4" cy="2.5" r="1.2" fill="#8a8a8a"/></svg>
<svg class="ic" style="left:49.4px;top:422.0px" width="8" height="9" viewBox="0 0 8 9"><rect x="0.6" y="0.6" width="6.8" height="7.8" rx="1.2" fill="#fff" stroke="#8a8a8a" stroke-width="0.9"/><rect x="3.2" y="4.2" width="1.6" height="1.6" fill="none" stroke="#aaa" stroke-width="0.5"/></svg>
<div class="tx" style="left:63.8px;top:422.5px;color:#555">Drawers:1</div>
<div class="lb" style="left:44.6px;top:433.2px;width:47.3px"></div>
<svg class="ic" style="left:34.9px;top:435.0px" width="6" height="7" viewBox="0 0 6 7"><path d="M0.8 0.8 L5.2 3.5 L0.8 6.2 Z" fill="none" stroke="#6b6b6b" stroke-width="1"/></svg>
<svg class="ic" style="left:46.1px;top:435.7px" width="8" height="5" viewBox="0 0 8 5"><ellipse cx="4" cy="2.5" rx="3.7" ry="2.1" fill="#e6e6e6"/></svg>
<svg class="ic" style="left:58.1px;top:434.7px" width="8" height="7" viewBox="0 0 8 7"><path d="M0 1 H3 L3.7 1.8 H8 V7 H0 Z" fill="#9b9b9b"/></svg>
<div class="tx" style="left:72.4px;top:434.2px;color:#555">Origin</div>
<div class="lb" style="left:44.6px;top:444.8px;width:49.5px"></div>
<svg class="ic" style="left:34.4px;top:446.2px" width="7" height="7" viewBox="0 0 7 7"><path d="M0.2 6.8 L6.8 6.8 L6.8 0.2 Z" fill="#666"/></svg>
<svg class="ic" style="left:46.1px;top:447.3px" width="8" height="5" viewBox="0 0 8 5"><ellipse cx="4" cy="2.5" rx="3.7" ry="2.1" fill="#a3a3a3"/><circle cx="4" cy="2.5" r="1.2" fill="#8a8a8a"/></svg>
<svg class="ic" style="left:58.1px;top:446.3px" width="8" height="7" viewBox="0 0 8 7"><path d="M0 1 H3 L3.7 1.8 H8 V7 H0 Z" fill="#9b9b9b"/></svg>
<div class="tx" style="left:72.4px;top:445.8px;color:#555">Bodies</div>
<div class="lb" style="left:53.3px;top:456.4px;width:48.1px"></div>
<svg class="ic" style="left:54.8px;top:458.9px" width="8" height="5" viewBox="0 0 8 5"><ellipse cx="4" cy="2.5" rx="3.7" ry="2.1" fill="#a3a3a3"/><circle cx="4" cy="2.5" r="1.2" fill="#8a8a8a"/></svg>
<svg class="ic" style="left:66.8px;top:456.9px" width="8" height="9" viewBox="0 0 8 9"><rect x="0.6" y="0.6" width="6.8" height="7.8" rx="1.2" fill="#fff" stroke="#8a8a8a" stroke-width="0.9"/><rect x="3.2" y="4.4" width="1.6" height="1.6" fill="none" stroke="#aaa" stroke-width="0.5"/></svg>
<div class="tx" style="left:81.0px;top:457.4px;color:#555">Body2</div>
<div class="lb" style="left:53.3px;top:468.1px;width:48.1px"></div>
<svg class="ic" style="left:54.8px;top:470.6px" width="8" height="5" viewBox="0 0 8 5"><ellipse cx="4" cy="2.5" rx="3.7" ry="2.1" fill="#a3a3a3"/><circle cx="4" cy="2.5" r="1.2" fill="#8a8a8a"/></svg>
<svg class="ic" style="left:66.8px;top:468.6px" width="8" height="9" viewBox="0 0 8 9"><rect x="0.6" y="0.6" width="6.8" height="7.8" rx="1.2" fill="#fff" stroke="#8a8a8a" stroke-width="0.9"/><rect x="3.2" y="4.4" width="1.6" height="1.6" fill="none" stroke="#aaa" stroke-width="0.5"/></svg>
<div class="tx" style="left:81.0px;top:469.1px;color:#555">Body3</div>
<div class="lb" style="left:53.3px;top:479.8px;width:48.1px"></div>
<svg class="ic" style="left:54.8px;top:482.2px" width="8" height="5" viewBox="0 0 8 5"><ellipse cx="4" cy="2.5" rx="3.7" ry="2.1" fill="#a3a3a3"/><circle cx="4" cy="2.5" r="1.2" fill="#8a8a8a"/></svg>
<svg class="ic" style="left:66.8px;top:480.2px" width="8" height="9" viewBox="0 0 8 9"><rect x="0.6" y="0.6" width="6.8" height="7.8" rx="1.2" fill="#fff" stroke="#8a8a8a" stroke-width="0.9"/><rect x="3.2" y="4.4" width="1.6" height="1.6" fill="none" stroke="#aaa" stroke-width="0.5"/></svg>
<div class="tx" style="left:81.0px;top:480.8px;color:#555">Body4</div>
<div class="lb" style="left:53.3px;top:491.4px;width:48.1px"></div>
<svg class="ic" style="left:54.8px;top:493.9px" width="8" height="5" viewBox="0 0 8 5"><ellipse cx="4" cy="2.5" rx="3.7" ry="2.1" fill="#a3a3a3"/><circle cx="4" cy="2.5" r="1.2" fill="#8a8a8a"/></svg>
<svg class="ic" style="left:66.8px;top:491.9px" width="8" height="9" viewBox="0 0 8 9"><rect x="0.6" y="0.6" width="6.8" height="7.8" rx="1.2" fill="#fff" stroke="#8a8a8a" stroke-width="0.9"/><rect x="3.2" y="4.4" width="1.6" height="1.6" fill="none" stroke="#aaa" stroke-width="0.5"/></svg>
<div class="tx" style="left:81.0px;top:492.4px;color:#555">Body5</div>
<div class="lb" style="left:53.3px;top:503.1px;width:48.1px"></div>
<svg class="ic" style="left:54.8px;top:505.6px" width="8" height="5" viewBox="0 0 8 5"><ellipse cx="4" cy="2.5" rx="3.7" ry="2.1" fill="#a3a3a3"/><circle cx="4" cy="2.5" r="1.2" fill="#8a8a8a"/></svg>
<svg class="ic" style="left:66.8px;top:503.6px" width="8" height="9" viewBox="0 0 8 9"><rect x="0.6" y="0.6" width="6.8" height="7.8" rx="1.2" fill="#fff" stroke="#8a8a8a" stroke-width="0.9"/><rect x="3.2" y="4.4" width="1.6" height="1.6" fill="none" stroke="#aaa" stroke-width="0.5"/></svg>
<div class="tx" style="left:81.0px;top:504.1px;color:#555">Body6</div>
<div class="lb" style="left:53.3px;top:514.7px;width:48.1px"></div>
<svg class="ic" style="left:54.8px;top:517.2px" width="8" height="5" viewBox="0 0 8 5"><ellipse cx="4" cy="2.5" rx="3.7" ry="2.1" fill="#a3a3a3"/><circle cx="4" cy="2.5" r="1.2" fill="#8a8a8a"/></svg>
<svg class="ic" style="left:66.8px;top:515.2px" width="8" height="9" viewBox="0 0 8 9"><rect x="0.6" y="0.6" width="6.8" height="7.8" rx="1.2" fill="#fff" stroke="#8a8a8a" stroke-width="0.9"/><rect x="3.2" y="4.4" width="1.6" height="1.6" fill="none" stroke="#aaa" stroke-width="0.5"/></svg>
<div class="tx" style="left:81.0px;top:515.7px;color:#555">Body7</div>
<div class="lb" style="left:53.3px;top:526.4px;width:48.1px"></div>
<svg class="ic" style="left:54.8px;top:528.9px" width="8" height="5" viewBox="0 0 8 5"><ellipse cx="4" cy="2.5" rx="3.7" ry="2.1" fill="#a3a3a3"/><circle cx="4" cy="2.5" r="1.2" fill="#8a8a8a"/></svg>
<svg class="ic" style="left:66.8px;top:526.9px" width="8" height="9" viewBox="0 0 8 9"><rect x="0.6" y="0.6" width="6.8" height="7.8" rx="1.2" fill="#fff" stroke="#8a8a8a" stroke-width="0.9"/><rect x="3.2" y="4.4" width="1.6" height="1.6" fill="none" stroke="#aaa" stroke-width="0.5"/></svg>
<div class="tx" style="left:81.0px;top:527.4px;color:#555">Body9</div>
<div class="lb" style="left:53.3px;top:538.0px;width:51.4px"></div>
<svg class="ic" style="left:54.8px;top:540.5px" width="8" height="5" viewBox="0 0 8 5"><ellipse cx="4" cy="2.5" rx="3.7" ry="2.1" fill="#a3a3a3"/><circle cx="4" cy="2.5" r="1.2" fill="#8a8a8a"/></svg>
<svg class="ic" style="left:66.8px;top:538.5px" width="8" height="9" viewBox="0 0 8 9"><rect x="0.6" y="0.6" width="6.8" height="7.8" rx="1.2" fill="#fff" stroke="#8a8a8a" stroke-width="0.9"/><rect x="3.2" y="4.4" width="1.6" height="1.6" fill="none" stroke="#aaa" stroke-width="0.5"/></svg>
<div class="tx" style="left:81.0px;top:539.0px;color:#555">Body10</div>
<div class="lb" style="left:53.3px;top:549.7px;width:50.9px"></div>
<svg class="ic" style="left:54.8px;top:552.2px" width="8" height="5" viewBox="0 0 8 5"><ellipse cx="4" cy="2.5" rx="3.7" ry="2.1" fill="#a3a3a3"/><circle cx="4" cy="2.5" r="1.2" fill="#8a8a8a"/></svg>
<svg class="ic" style="left:66.8px;top:550.2px" width="8" height="9" viewBox="0 0 8 9"><rect x="0.6" y="0.6" width="6.8" height="7.8" rx="1.2" fill="#fff" stroke="#8a8a8a" stroke-width="0.9"/><rect x="3.2" y="4.4" width="1.6" height="1.6" fill="none" stroke="#aaa" stroke-width="0.5"/></svg>
<div class="tx" style="left:81.0px;top:550.7px;color:#555">Body11</div>
<div class="lb" style="left:53.3px;top:561.3px;width:51.4px"></div>
<svg class="ic" style="left:54.8px;top:563.8px" width="8" height="5" viewBox="0 0 8 5"><ellipse cx="4" cy="2.5" rx="3.7" ry="2.1" fill="#a3a3a3"/><circle cx="4" cy="2.5" r="1.2" fill="#8a8a8a"/></svg>
<svg class="ic" style="left:66.8px;top:561.8px" width="8" height="9" viewBox="0 0 8 9"><rect x="0.6" y="0.6" width="6.8" height="7.8" rx="1.2" fill="#fff" stroke="#8a8a8a" stroke-width="0.9"/><rect x="3.2" y="4.4" width="1.6" height="1.6" fill="none" stroke="#aaa" stroke-width="0.5"/></svg>
<div class="tx" style="left:81.0px;top:562.3px;color:#555">Body12</div>
<div class="lb" style="left:53.3px;top:573.0px;width:51.4px"></div>
<svg class="ic" style="left:54.8px;top:575.5px" width="8" height="5" viewBox="0 0 8 5"><ellipse cx="4" cy="2.5" rx="3.7" ry="2.1" fill="#a3a3a3"/><circle cx="4" cy="2.5" r="1.2" fill="#8a8a8a"/></svg>
<svg class="ic" style="left:66.8px;top:573.5px" width="8" height="9" viewBox="0 0 8 9"><rect x="0.6" y="0.6" width="6.8" height="7.8" rx="1.2" fill="#fff" stroke="#8a8a8a" stroke-width="0.9"/><rect x="3.2" y="4.4" width="1.6" height="1.6" fill="none" stroke="#aaa" stroke-width="0.5"/></svg>
<div class="tx" style="left:81.0px;top:574.0px;color:#555">Body13</div>
<div class="lb" style="left:53.3px;top:584.6px;width:51.4px"></div>
<svg class="ic" style="left:54.8px;top:587.1px" width="8" height="5" viewBox="0 0 8 5"><ellipse cx="4" cy="2.5" rx="3.7" ry="2.1" fill="#a3a3a3"/><circle cx="4" cy="2.5" r="1.2" fill="#8a8a8a"/></svg>
<svg class="ic" style="left:66.8px;top:585.1px" width="8" height="9" viewBox="0 0 8 9"><rect x="0.6" y="0.6" width="6.8" height="7.8" rx="1.2" fill="#fff" stroke="#8a8a8a" stroke-width="0.9"/><rect x="3.2" y="4.4" width="1.6" height="1.6" fill="none" stroke="#aaa" stroke-width="0.5"/></svg>
<div class="tx" style="left:81.0px;top:585.6px;color:#555">Body14</div>
<div class="lb" style="left:44.6px;top:596.2px;width:55.7px"></div>
<svg class="ic" style="left:34.4px;top:597.6px" width="7" height="7" viewBox="0 0 7 7"><path d="M0.2 6.8 L6.8 6.8 L6.8 0.2 Z" fill="#666"/></svg>
<svg class="ic" style="left:46.1px;top:598.8px" width="8" height="5" viewBox="0 0 8 5"><ellipse cx="4" cy="2.5" rx="3.7" ry="2.1" fill="#a3a3a3"/><circle cx="4" cy="2.5" r="1.2" fill="#8a8a8a"/></svg>
<svg class="ic" style="left:58.1px;top:597.8px" width="8" height="7" viewBox="0 0 8 7"><path d="M0 1 H3 L3.7 1.8 H8 V7 H0 Z" fill="#9b9b9b"/></svg>
<div class="tx" style="left:72.4px;top:597.2px;color:#555">Sketches</div>
<div class="lb" style="left:53.3px;top:607.9px;width:52.7px"></div>
<svg class="ic" style="left:54.8px;top:610.4px" width="8" height="5" viewBox="0 0 8 5"><ellipse cx="4" cy="2.5" rx="3.7" ry="2.1" fill="#e6e6e6"/></svg>
<svg class="ic" style="left:66.8px;top:608.4px" width="9" height="9" viewBox="0 0 9 9"><path d="M7.2 3.2 V0.8 H0.8 V8.2 H5.2" fill="#fdfdfd" stroke="#8f8f8f" stroke-width="0.7"/><path d="M7.2 3.2 L8.2 5.2 L6.6 7 L6.2 8.6" fill="none" stroke="#a0a0a0" stroke-width="0.6"/><rect x="0.3" y="0.3" width="1.1" height="1.1" fill="#777"/><rect x="6.6" y="0.3" width="1.1" height="1.1" fill="#777"/><rect x="0.3" y="7.6" width="1.1" height="1.1" fill="#777"/></svg>
<div class="tx" style="left:81.0px;top:608.9px;color:#555">Sketch1</div>
<div class="lb" style="left:53.3px;top:619.6px;width:52.7px"></div>
<svg class="ic" style="left:54.8px;top:622.1px" width="8" height="5" viewBox="0 0 8 5"><ellipse cx="4" cy="2.5" rx="3.7" ry="2.1" fill="#e6e6e6"/></svg>
<svg class="ic" style="left:66.8px;top:620.1px" width="9" height="9" viewBox="0 0 9 9"><path d="M0.8 0.8 H7.2 M0.8 0.8 V8.2 H4.8 M7 0.8 V5.8" fill="none" stroke="#7a7a7a" stroke-width="0.7"/><rect x="0.3" y="0.3" width="1.1" height="1.1" fill="#777"/><rect x="0.3" y="7.6" width="1.1" height="1.1" fill="#777"/><circle cx="6.9" cy="7.2" r="1.7" fill="#a65468"/></svg>
<div class="tx" style="left:81.0px;top:620.6px;color:#555">Sketch2</div>
<div class="lb" style="left:53.3px;top:631.2px;width:52.7px"></div>
<svg class="ic" style="left:54.8px;top:633.7px" width="8" height="5" viewBox="0 0 8 5"><ellipse cx="4" cy="2.5" rx="3.7" ry="2.1" fill="#e6e6e6"/></svg>
<svg class="ic" style="left:66.8px;top:631.7px" width="9" height="9" viewBox="0 0 9 9"><path d="M7.2 3.2 V0.8 H0.8 V8.2 H5.2" fill="#fdfdfd" stroke="#8f8f8f" stroke-width="0.7"/><path d="M7.2 3.2 L8.2 5.2 L6.6 7 L6.2 8.6" fill="none" stroke="#a0a0a0" stroke-width="0.6"/><rect x="0.3" y="0.3" width="1.1" height="1.1" fill="#777"/><rect x="6.6" y="0.3" width="1.1" height="1.1" fill="#777"/><rect x="0.3" y="7.6" width="1.1" height="1.1" fill="#777"/></svg>
<div class="tx" style="left:81.0px;top:632.2px;color:#555">Sketch4</div>
<!-- viewcube -->
<svg class="ic" style="left:1185px;top:58px" width="54" height="50" viewBox="1185 58 54 50">
<defs><linearGradient id="cubeG" x1="0" y1="0" x2="0" y2="1"><stop offset="0" stop-color="#e2e2e2"/><stop offset="1" stop-color="#ececec"/></linearGradient></defs>
<rect x="1198.3" y="73.2" width="24.6" height="25.8" fill="url(#cubeG)" stroke="#cfcfcf" stroke-width="0.8"/>
<line x1="1197.3" y1="67" x2="1197.3" y2="100.3" stroke="#a8b0d8" stroke-width="1.4"/>
<line x1="1196.8" y1="99.8" x2="1228" y2="99.8" stroke="#d8a4a4" stroke-width="1.4"/>
<path d="M1195.6 62.5 H1198.6 L1195.6 65.5 H1198.6" fill="none" stroke="#a0a8cc" stroke-width="0.7"/>
<path d="M1229 96.8 L1232 100.5 M1232 96.8 L1229 100.5" fill="none" stroke="#d09a9a" stroke-width="0.7"/>
</svg>
<div class="tx" style="left:1201.5px;top:82.6px;font-size:5.3px;color:#7c7c7c;-webkit-text-stroke:0.1px #7c7c7c">FRONT</div>

<!-- model -->
<svg class="ic" style="left:0;top:0" width="1239" height="642" viewBox="0 0 1239 642">
<defs>
<linearGradient id="railL" x1="0" y1="0" x2="0" y2="1">
<stop offset="0" stop-color="#8e8e8e"/><stop offset="0.25" stop-color="#a9a9a9"/><stop offset="0.7" stop-color="#bdbdbd"/><stop offset="1" stop-color="#cdcdcd"/></linearGradient>
<linearGradient id="railR" x1="0" y1="0" x2="1" y2="0">
<stop offset="0" stop-color="#c2c2c2"/><stop offset="0.15" stop-color="#e2e2e2"/><stop offset="1" stop-color="#ebebeb"/></linearGradient>
<linearGradient id="legL" x1="0" y1="0" x2="0" y2="1"><stop offset="0" stop-color="#bdbdbd"/><stop offset="0.16" stop-color="#d6d6d6"/><stop offset="0.45" stop-color="#ededed"/><stop offset="1" stop-color="#f7f7f7"/></linearGradient>
<linearGradient id="legG" x1="0" y1="0" x2="0" y2="1">
<stop offset="0" stop-color="#e8e8e8"/><stop offset="0.3" stop-color="#f2f2f2"/><stop offset="1" stop-color="#fafafa"/></linearGradient>
<filter id="grain" x="0" y="0" width="100%" height="100%" filterUnits="userSpaceOnUse">
<feTurbulence type="fractalNoise" baseFrequency="0.03 0.45" numOctaves="3" seed="7" result="n"/>
<feColorMatrix in="n" type="matrix" values="0.33 0.33 0.33 0 0 0.33 0.33 0.33 0 0 0.33 0.33 0.33 0 0 0 0 0 0 1" result="g"/>
<feComposite in="SourceGraphic" in2="g" operator="arithmetic" k1="0.5" k2="0.75" k3="0" k4="0"/>
</filter>
</defs>
<!-- rails -->
<rect x="240" y="505.2" width="418" height="18.8" fill="url(#railL)"/>
<line x1="240" y1="505.6" x2="658" y2="505.6" stroke="#8a8a8a" stroke-width="0.8"/>
<line x1="240" y1="523.6" x2="658" y2="523.6" stroke="#c2c2c2" stroke-width="0.8"/>
<rect x="673" y="505.2" width="418.5" height="18.8" fill="url(#railR)"/>
<line x1="673" y1="505.6" x2="1091" y2="505.6" stroke="#bdbdbd" stroke-width="0.8"/>
<line x1="673" y1="523.6" x2="1091" y2="523.6" stroke="#cfcfcf" stroke-width="0.8"/>
<!-- left leg -->
<path d="M219.2 622 L219.2 509.5 L223 505.5 L241 505.5 L241 524 L226.8 622 Z" fill="url(#legL)" stroke="#ababab" stroke-width="0.8"/>
<line x1="222" y1="508" x2="222" y2="621" stroke="#d4d4d4" stroke-width="0.6"/>
<!-- right leg -->
<path d="M1113.6 622.5 L1113.6 510 Q1113.6 505 1109 505 L1091.2 505 L1091.2 524.3 L1104.3 622.5 Z" fill="url(#legG)" stroke="#ababab" stroke-width="0.8"/>
<line x1="1110.4" y1="508" x2="1110.4" y2="621" stroke="#cfcfcf" stroke-width="0.6"/>
<!-- middle leg -->
<rect x="658.4" y="495" width="15" height="127" fill="#f6f6f6" stroke="#a9a9a9" stroke-width="0.8"/>
<rect x="658.4" y="495" width="15" height="17.5" fill="#eeeeee" stroke="#a9a9a9" stroke-width="0.8"/>
<line x1="660.5" y1="512" x2="660.5" y2="621" stroke="#d0d0d0" stroke-width="0.6"/>
<line x1="671.3" y1="512" x2="671.3" y2="621" stroke="#d0d0d0" stroke-width="0.6"/>
<!-- dowels -->
<rect x="332.4" y="494.8" width="9" height="21.5" fill="#6e5c3c"/>
<rect x="555.2" y="494.8" width="9" height="21.5" fill="#6e5c3c"/>
<rect x="767.8" y="494.8" width="9.5" height="21.5" fill="#b89450"/>
<rect x="991" y="494.8" width="9.5" height="21.5" fill="#b89450"/>
<rect x="333.5" y="519" width="7" height="1.2" fill="#a6b2c2"/>
<rect x="556.3" y="519" width="7" height="1.2" fill="#a6b2c2"/>
<rect x="769" y="519" width="7" height="1.2" fill="#a6b2c2"/>
<rect x="992.3" y="519" width="7" height="1.2" fill="#a6b2c2"/>
<g filter="url(#grain)">
<!-- sideboard carcass -->
<rect x="230.3" y="329.5" width="871.9" height="8" fill="#c5b28c" stroke="#80725a" stroke-width="0.9"/>
<rect x="230.3" y="486.5" width="871.9" height="8.3" fill="#c5b28c" stroke="#80725a" stroke-width="0.9"/>
<rect x="230.3" y="337.5" width="8.4" height="149" fill="#c5b28c" stroke="#80725a" stroke-width="0.9"/>
<rect x="1093.8" y="337.5" width="8.4" height="149" fill="#c5b28c" stroke="#80725a" stroke-width="0.9"/>
<rect x="663.7" y="334.8" width="8.1" height="159.5" fill="#c5b28c" stroke="#80725a" stroke-width="0.9"/>
<!-- drawers -->
<defs>
<clipPath id="dc0"><path d="M239 338 H309.2 V339 Q309.2 349.4 319.5 349.4 H582.5 Q592.2 349.4 592.2 339 V338 H662.4 V378.6 H239 Z"/></clipPath>
<clipPath id="dc1"><path d="M239 389 H309.2 V390 Q309.2 400.2 319.5 400.2 H582.5 Q592.2 400.2 592.2 390 V389 H662.4 V430.4 H239 Z"/></clipPath>
<clipPath id="dc2"><path d="M239 439.5 H309.2 V440.5 Q309.2 450.5 319.5 450.5 H582.5 Q592.2 450.5 592.2 440.5 V439.5 H662.4 V486.2 H239 Z"/></clipPath>
</defs>
<path d="M239 338 H309.2 V339 Q309.2 349.4 319.5 349.4 H582.5 Q592.2 349.4 592.2 339 V338 H662.4 V378.6 H239 Z" fill="#a08d6d"/>
<path d="M239 338 H309.2 V339 Q309.2 349.4 319.5 349.4 H582.5 Q592.2 349.4 592.2 339 V338 H662.4 V378.6 H239 Z" fill="none" stroke="#8e8a78" stroke-width="3.2" clip-path="url(#dc0)"/>
<path d="M239 338 H309.2 V339 Q309.2 349.4 319.5 349.4 H582.5 Q592.2 349.4 592.2 339 V338 H662.4 V378.6 H239 Z" fill="none" stroke="#6f6452" stroke-width="0.9"/>
<path d="M239 389 H309.2 V390 Q309.2 400.2 319.5 400.2 H582.5 Q592.2 400.2 592.2 390 V389 H662.4 V430.4 H239 Z" fill="#a08d6d"/>
<path d="M239 389 H309.2 V390 Q309.2 400.2 319.5 400.2 H582.5 Q592.2 400.2 592.2 390 V389 H662.4 V430.4 H239 Z" fill="none" stroke="#8e8a78" stroke-width="3.2" clip-path="url(#dc1)"/>
<path d="M239 389 H309.2 V390 Q309.2 400.2 319.5 400.2 H582.5 Q592.2 400.2 592.2 390 V389 H662.4 V430.4 H239 Z" fill="none" stroke="#6f6452" stroke-width="0.9"/>
<path d="M239 439.5 H309.2 V440.5 Q309.2 450.5 319.5 450.5 H582.5 Q592.2 450.5 592.2 440.5 V439.5 H662.4 V486.2 H239 Z" fill="#a08d6d"/>
<path d="M239 439.5 H309.2 V440.5 Q309.2 450.5 319.5 450.5 H582.5 Q592.2 450.5 592.2 440.5 V439.5 H662.4 V486.2 H239 Z" fill="none" stroke="#8e8a78" stroke-width="3.2" clip-path="url(#dc2)"/>
<path d="M239 439.5 H309.2 V440.5 Q309.2 450.5 319.5 450.5 H582.5 Q592.2 450.5 592.2 440.5 V439.5 H662.4 V486.2 H239 Z" fill="none" stroke="#6f6452" stroke-width="0.9"/>
<!-- shelves -->
<rect x="234.3" y="379.8" width="431.7" height="8.7" fill="#c5b28c" stroke="#80725a" stroke-width="0.9"/>
<rect x="234.3" y="430.8" width="431.7" height="8.5" fill="#c5b28c" stroke="#80725a" stroke-width="0.9"/>
</g>
<!-- handles -->
<g fill="#c6b48f" stroke="#6b5e44" stroke-width="0.9">
<rect x="238.4" y="355.8" width="4.2" height="8"/>
<rect x="659" y="355.8" width="4.2" height="8"/>
<rect x="238.4" y="405.8" width="4.2" height="8"/>
<rect x="659" y="405.8" width="4.2" height="8"/>
<rect x="238.4" y="459.3" width="4.2" height="8"/>
<rect x="659" y="459.3" width="4.2" height="8"/>
</g>
<!-- cursor -->
<path d="M258.2 265.8 L258.2 273 L260 271.3 L261.5 274.5 L262.5 274 L261.2 270.9 L263.6 270.9 Z" fill="#1a1a1a" stroke="#fff" stroke-width="0.4"/>
<rect x="265.5" y="264.5" width="7.5" height="7" fill="#e6e6e6"/>
<rect x="268" y="265.5" width="2" height="5" fill="#b8b8b8"/>
</svg>

</div></body></html>
